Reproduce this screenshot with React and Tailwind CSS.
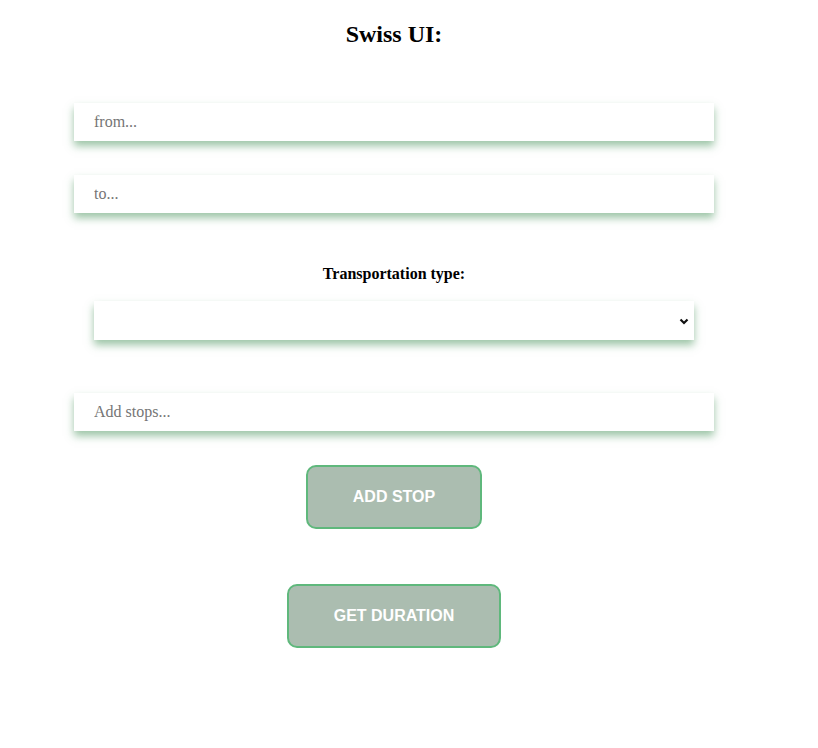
export default function App() {
  return (
    <div className="w-[788px] bg-white font-['Liberation_Serif',serif] text-black">
      <h2 className="pt-[20px] text-center text-[24px] font-bold leading-[28px]">Swiss UI:</h2>
      <div className="mt-[55px] flex flex-col items-center">
        <input
          placeholder="from..."
          className="h-[38px] w-[640px] bg-white pl-[20px] text-[16px] placeholder:text-[#757575] outline-none shadow-[0_5px_8px_rgba(60,140,80,0.5)]"
        />
        <input
          placeholder="to..."
          className="mt-[34px] h-[38px] w-[640px] bg-white pl-[20px] text-[16px] placeholder:text-[#757575] outline-none shadow-[0_5px_8px_rgba(60,140,80,0.5)]"
        />
        <label className="mt-[52px] text-[16px] font-bold leading-[18px]">Transportation type:</label>
        <div className="mt-[18px] flex h-[39px] w-[600px] items-center justify-end bg-white pr-[4px] shadow-[0_5px_8px_rgba(60,140,80,0.5)]">
          <svg width="12" height="12" viewBox="0 0 12 12" fill="none" stroke="#111" strokeWidth="2.2">
            <path d="M2.5 4.5 L6 8 L9.5 4.5" />
          </svg>
        </div>
        <input
          placeholder="Add stops..."
          className="mt-[53px] h-[38px] w-[640px] bg-white pl-[20px] text-[16px] placeholder:text-[#757575] outline-none shadow-[0_5px_8px_rgba(60,140,80,0.5)]"
        />
        <button className="mt-[34px] h-[64px] w-[176px] rounded-[10px] border-2 border-[#5fb87c] bg-[#abbdb0] font-['Liberation_Sans',Arial,sans-serif] text-[16px] font-bold text-white">
          ADD STOP
        </button>
        <button className="mt-[55px] h-[64px] w-[214px] rounded-[10px] border-2 border-[#5fb87c] bg-[#abbdb0] font-['Liberation_Sans',Arial,sans-serif] text-[16px] font-bold text-white">
          GET DURATION
        </button>
      </div>
      <div className="h-[100px]" />
    </div>
  );
}
